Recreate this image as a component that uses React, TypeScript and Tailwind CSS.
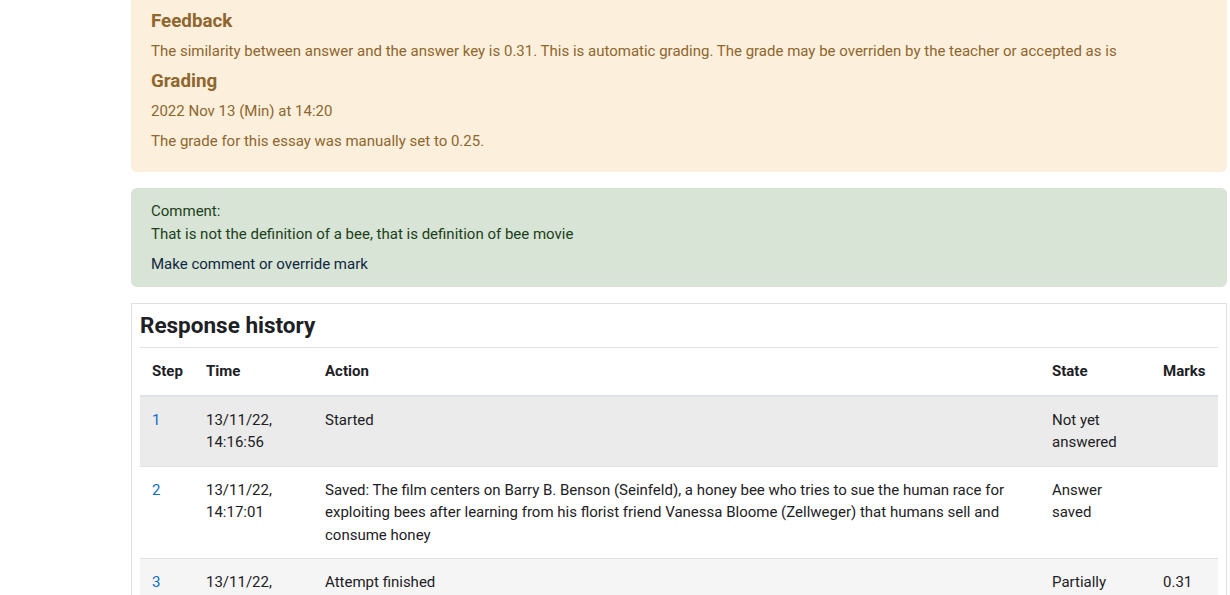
type TStep = {
  step: string;
  time: [string, string];
  action: string[];
  state: string[];
  marks?: string;
  bg: string;
};

const steps: TStep[] = [
  {
    step: "1",
    time: ["13/11/22,", "14:16:56"],
    action: ["Started"],
    state: ["Not yet", "answered"],
    bg: "bg-[#ebebeb]",
  },
  {
    step: "2",
    time: ["13/11/22,", "14:17:01"],
    action: [
      "Saved: The film centers on Barry B. Benson (Seinfeld), a honey bee who tries to sue the human race for",
      "exploiting bees after learning from his florist friend Vanessa Bloome (Zellweger) that humans sell and",
      "consume honey",
    ],
    state: ["Answer", "saved"],
    bg: "bg-white",
  },
  {
    step: "3",
    time: ["13/11/22,", "14:20:00"],
    action: ["Attempt finished"],
    state: ["Partially", "correct"],
    marks: "0.31",
    bg: "bg-[#f5f5f5]",
  },
];

const Lines = ({ lines }: { lines: string[] }) => (
  <>
    {lines.map((l, i) => (
      <span key={i}>
        {l}
        {i < lines.length - 1 && <br />}
      </span>
    ))}
  </>
);

export default function App() {
  return (
    <div
      className="min-h-[595px] bg-white text-[15px] leading-[22.5px] text-[#1d2125]"
      style={{ fontFamily: "Roboto, 'Liberation Sans', sans-serif" }}
    >
      <div className="ml-[131px] mr-[3px]">
        <div className="flex flex-col gap-[7.5px] rounded-b-[6px] bg-[#fcefdc] px-5 pt-[10px] pb-[19px] text-[#8e662e]">
          <h4 className="text-[18.75px] font-bold leading-[22.5px]">Feedback</h4>
          <p>
            The similarity between answer and the answer key is 0.31. This is automatic grading. The grade may be
            overriden by the teacher or accepted as is
          </p>
          <h4 className="text-[18.75px] font-bold leading-[22.5px]">Grading</h4>
          <p>2022 Nov 13 (Min) at 14:20</p>
          <p>The grade for this essay was manually set to 0.25.</p>
        </div>

        <div className="mt-[16.5px] rounded-[6px] bg-[#d7e4d6] px-5 py-3">
          <div className="text-[#1c3f1a]">
            <p>Comment:</p>
            <p>That is not the definition of a bee, that is definition of bee movie</p>
          </div>
          <a className="mt-[7.5px] block text-[#0f2740]">Make comment or override mark</a>
        </div>

        <div className="mt-4 border border-[#dee2e6] px-2 pt-2">
          <h3 className="mb-2 text-[22.5px] font-bold leading-[27px]">Response history</h3>
          <table className="w-[1078px] table-fixed border-collapse text-left">
            <colgroup>
              <col className="w-[54px]" />
              <col className="w-[119px]" />
              <col className="w-[727px]" />
              <col className="w-[111px]" />
              <col className="w-[67px]" />
            </colgroup>
            <thead>
              <tr className="border-t border-b-2 border-[#dee2e6]">
                <th className="p-3 pr-0 font-bold">Step</th>
                <th className="p-3 font-bold">Time</th>
                <th className="p-3 font-bold">Action</th>
                <th className="p-3 font-bold">State</th>
                <th className="p-3 font-bold">Marks</th>
              </tr>
            </thead>
            <tbody>
              {steps.map((s) => (
                <tr key={s.step} className={`border-b border-[#dee2e6] align-top ${s.bg}`}>
                  <td className="p-3 pr-0">
                    <a className="text-[#0f6cbf]">{s.step}</a>
                  </td>
                  <td className="p-3">
                    <Lines lines={s.time} />
                  </td>
                  <td className="p-3">
                    <Lines lines={s.action} />
                  </td>
                  <td className="p-3">
                    <Lines lines={s.state} />
                  </td>
                  <td className="p-3">{s.marks}</td>
                </tr>
              ))}
            </tbody>
          </table>
        </div>
      </div>
    </div>
  );
}
